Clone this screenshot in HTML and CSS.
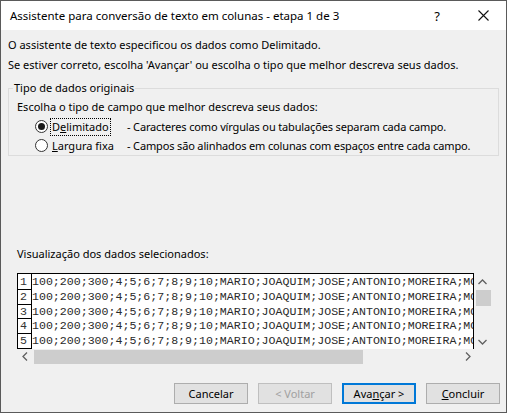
FILE: index.html
```html
<!DOCTYPE html>
<html lang="pt-BR">
<head>
  <meta charset="UTF-8">
  <title>Assistente para conversão de texto em colunas</title>
  <link rel="stylesheet" href="styles.css">
</head>
<body>
  <div class="dialog">
    <div class="titlebar">
      <span class="title">Assistente para conversão de texto em colunas - etapa 1 de 3</span>
      <span class="help">?</span>
      <span class="close">
        <svg width="11" height="11" viewBox="0 0 11 11"><path d="M0.5 0.5L10.5 10.5M10.5 0.5L0.5 10.5" stroke="#111" stroke-width="1.1" fill="none"/></svg>
      </span>
    </div>

    <div class="content">
      <p class="line">O assistente de texto especificou os dados como Delimitado.</p>
      <p class="line">Se estiver correto, escolha 'Avançar' ou escolha o tipo que melhor descreva seus dados.</p>

      <fieldset class="group">
        <legend>Tipo de dados originais</legend>
        <div class="line">Escolha o tipo de campo que melhor descreva seus dados:</div>
        <div class="radio-row">
          <span class="radio checked"></span>
          <span class="radio-label"><span class="focus">D<u>e</u>limitado</span></span>
          <span class="hint">- Caracteres como vírgulas ou tabulações separam cada campo.</span>
        </div>
        <div class="radio-row">
          <span class="radio"></span>
          <span class="radio-label"><span class="nofocus"><u>L</u>argura fixa</span></span>
          <span class="hint">- Campos são alinhados em colunas com espaços entre cada campo.</span>
        </div>
      </fieldset>

      <div class="preview-label">Visualização dos dados selecionados:</div>

      <div class="preview">
        <div class="data">
          <div class="nums">
            <div class="num">1</div>
            <div class="num">2</div>
            <div class="num">3</div>
            <div class="num">4</div>
            <div class="num">5</div>
          </div>
          <div class="rows">
            <div class="row">100;200;300;4;5;6;7;8;9;10;MARIO;JOAQUIM;JOSE;ANTONIO;MOREIRA;MOREIRA;SILVA</div>
            <div class="row">100;200;300;4;5;6;7;8;9;10;MARIO;JOAQUIM;JOSE;ANTONIO;MOREIRA;MOREIRA;SILVA</div>
            <div class="row">100;200;300;4;5;6;7;8;9;10;MARIO;JOAQUIM;JOSE;ANTONIO;MOREIRA;MOREIRA;SILVA</div>
            <div class="row">100;200;300;4;5;6;7;8;9;10;MARIO;JOAQUIM;JOSE;ANTONIO;MOREIRA;MOREIRA;SILVA</div>
            <div class="row">100;200;300;4;5;6;7;8;9;10;MARIO;JOAQUIM;JOSE;ANTONIO;MOREIRA;MOREIRA;SILVA</div>
          </div>
        </div>

        <div class="vscroll">
          <svg class="arrow" width="9" height="6" viewBox="0 0 9 6"><path d="M0.5 5L4.5 1L8.5 5" stroke="#606060" stroke-width="1.3" fill="none"/></svg>
          <div class="vthumb"></div>
          <span class="spacer"></span>
          <svg class="arrow" width="9" height="6" viewBox="0 0 9 6"><path d="M0.5 1L4.5 5L8.5 1" stroke="#606060" stroke-width="1.3" fill="none"/></svg>
        </div>

        <div class="hscroll">
          <svg class="arrow" width="6" height="9" viewBox="0 0 6 9"><path d="M5 0.5L1 4.5L5 8.5" stroke="#606060" stroke-width="1.3" fill="none"/></svg>
          <div class="hthumb"></div>
          <span class="spacer"></span>
          <svg class="arrow" width="6" height="9" viewBox="0 0 6 9"><path d="M1 0.5L5 4.5L1 8.5" stroke="#606060" stroke-width="1.3" fill="none"/></svg>
        </div>

        <div class="corner"></div>
      </div>
    </div>

    <div class="buttons">
      <button class="btn">Cancelar</button>
      <button class="btn" disabled>&lt; Voltar</button>
      <button class="btn default">Ava<u>n</u>çar &gt;</button>
      <button class="btn"><u>C</u>oncluir</button>
    </div>
  </div>
</body>
</html>
```

FILE: styles.css
```css
html, body {
  margin: 0;
  padding: 0;
}

body {
  width: 507px;
  height: 413px;
  font-family: "Noto Sans", "Open Sans", sans-serif;
  font-size: 11px;
  color: #000;
  background: #f0f0f0;
}

.dialog {
  width: 507px;
  height: 413px;
  box-sizing: border-box;
  border: 1px solid #5a5a5a;
  display: flex;
  flex-direction: column;
  background: #f0f0f0;
}

/* barra de título */
.titlebar {
  height: 29px;
  flex: none;
  background: #fff;
  display: flex;
  align-items: center;
  padding-left: 9px;
  font-size: 11.5px;
}

.titlebar .title {
  flex: 1;
  padding-bottom: 1px;
}

.titlebar .help {
  width: 46px;
  text-align: center;
  font-size: 13px;
}

.titlebar .close {
  width: 46px;
  height: 29px;
  display: flex;
  align-items: center;
  justify-content: center;
}

.content {
  padding: 5px 7px 0 7px;
}

.line {
  margin: 0;
  line-height: 20px;
  white-space: nowrap;
}

/* grupo de opções */
.group {
  margin: 5px 0 0 0;
  padding: 1px 8px 0 8px;
  border: 1px solid #dcdcdc;
  min-width: 0;
}

.group legend {
  padding: 0 1px;
  margin-left: -4px;
  line-height: 16px;
}

.radio-row {
  display: flex;
  align-items: center;
  height: 19px;
  padding-left: 18px;
  white-space: nowrap;
}

.radio {
  width: 13px;
  height: 13px;
  box-sizing: border-box;
  border: 1px solid #333;
  border-radius: 50%;
  background: #fff;
  display: flex;
  align-items: center;
  justify-content: center;
  flex: none;
}

.radio.checked::after {
  content: "";
  width: 7px;
  height: 7px;
  border-radius: 50%;
  background: #1a1a1a;
}

.radio-label {
  width: 76px;
  padding-left: 3px;
  flex: none;
}

.focus,
.nofocus {
  display: inline-block;
  padding: 0 1px;
  line-height: 16px;
  outline: 1px dotted transparent;
}

.focus {
  outline-color: #000;
}

.hint {
  letter-spacing: -0.15px;
}

.preview-label {
  margin-top: 88px;
  padding-left: 9px;
  line-height: 20px;
}

/* pré-visualização dos dados */
.preview {
  margin: 9px 0 0 9px;
  width: 474px;
  display: grid;
  grid-template-columns: 457px 17px;
  grid-template-rows: 76px 15px;
}

.data {
  border: 1px solid #000;
  border-bottom: none;
  background: #fff;
  display: flex;
  overflow: hidden;
}

.nums {
  width: 13px;
  flex: none;
  border-right: 1px solid #000;
  padding-top: 1px;
}

.num {
  height: 14.75px;
  box-sizing: border-box;
  border-bottom: 1px solid #000;
  font-family: "Liberation Mono", "Courier New", monospace;
  font-size: 11.6px;
  line-height: 14px;
  padding-left: 2px;
  color: #333;
}

.rows {
  flex: 1;
  overflow: hidden;
  padding-top: 1px;
}

.row {
  height: 14.75px;
  line-height: 14.75px;
  white-space: nowrap;
  font-family: "Liberation Mono", "Courier New", monospace;
  font-size: 11.6px;
  color: #2a2a2a;
}

.vscroll {
  display: flex;
  flex-direction: column;
  align-items: center;
  padding: 6px 0 4px 0;
  background: #f0f0f0;
}

.vthumb {
  width: 15px;
  height: 16px;
  margin-top: 5px;
  margin-left: 1px;
  background: #cdcdcd;
}

.spacer {
  flex: 1;
}

.hscroll {
  display: flex;
  align-items: center;
  padding: 0 3px 0 5px;
  background: #f0f0f0;
}

.hthumb {
  width: 329px;
  height: 14px;
  margin-left: 6px;
  background: #cdcdcd;
}

.corner {
  background: #f0f0f0;
}

/* botões */
.buttons {
  margin-top: auto;
  display: flex;
  justify-content: flex-end;
  gap: 10px;
  padding: 0 6px 8px 0;
}

.btn {
  width: 74px;
  height: 21px;
  box-sizing: border-box;
  border: 1px solid #adadad;
  background: #e1e1e1;
  font-family: "Noto Sans", "Open Sans", sans-serif;
  font-size: 11px;
  color: #000;
  padding: 0;
}

.btn:disabled {
  color: #a0a0a0;
  border-color: #bfbfbf;
  background: #e1e1e1;
}

.btn.default {
  border: 2px solid #0078d7;
}
```
